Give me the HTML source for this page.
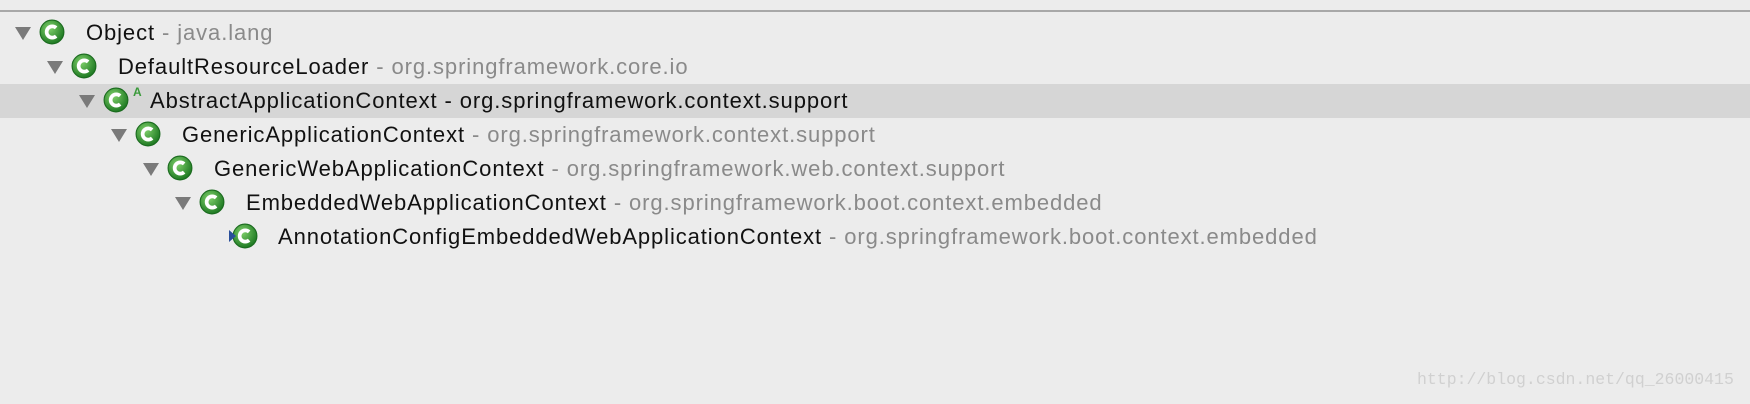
<!DOCTYPE html>
<html><head><style>
body{margin:0;width:1750px;height:404px;background:#ececec;position:relative;overflow:hidden;font-family:"Liberation Sans",sans-serif;}
.top{position:absolute;left:0;top:0;width:1750px;height:10px;background:#ececec;border-bottom:2px solid #a8a8a8;}
.row{position:absolute;left:0;width:1750px;height:34px;}
.sel{background:#d6d6d6;}
.tri{position:absolute;top:11px;width:0;height:0;border-left:8px solid transparent;border-right:8px solid transparent;border-top:13px solid #7a7a7a;}
.ic{position:absolute;top:3px;width:26px;height:26px;}
.t{position:absolute;top:4px;font-size:22px;letter-spacing:0.9px;color:#111;white-space:nowrap;}
.t span{color:#8a8a8a;}
.A{position:absolute;top:1px;font-size:12px;color:#3a9a3a;font-weight:bold;}
.wm{position:absolute;left:1417px;top:370px;font-family:"Liberation Mono",monospace;font-size:16.5px;color:#d0d0d0;}
</style></head><body>
<div class="top"></div>
<svg width="0" height="0" style="position:absolute"><defs>
<radialGradient id="g" cx="40%" cy="35%" r="65%"><stop offset="0" stop-color="#7fd06a"/><stop offset="1" stop-color="#1f7a23"/></radialGradient>
<symbol id="c" viewBox="0 0 24 24"><circle cx="12" cy="12" r="11" fill="url(#g)" stroke="#1a6a1e" stroke-width="1"/><path d="M15.8 8.2A5.2 5.2 0 1 0 15.8 15.8" fill="none" stroke="#fff" stroke-width="3.4"/></symbol>
</defs></svg>

<div class="row" style="top:16px"><div class="tri" style="left:15px"></div><svg class="ic" style="left:39px"><use href="#c"/></svg><div class="t" style="left:86px">Object <span>- java.lang</span></div></div>
<div class="row" style="top:50px"><div class="tri" style="left:47px"></div><svg class="ic" style="left:71px"><use href="#c"/></svg><div class="t" style="left:118px">DefaultResourceLoader <span>- org.springframework.core.io</span></div></div>
<div class="row sel" style="top:84px"><div class="tri" style="left:79px"></div><svg class="ic" style="left:103px"><use href="#c"/></svg><div class="A" style="left:133px">A</div><div class="t" style="left:150px">AbstractApplicationContext - org.springframework.context.support</div></div>
<div class="row" style="top:118px"><div class="tri" style="left:111px"></div><svg class="ic" style="left:135px"><use href="#c"/></svg><div class="t" style="left:182px">GenericApplicationContext <span>- org.springframework.context.support</span></div></div>
<div class="row" style="top:152px"><div class="tri" style="left:143px"></div><svg class="ic" style="left:167px"><use href="#c"/></svg><div class="t" style="left:214px">GenericWebApplicationContext <span>- org.springframework.web.context.support</span></div></div>
<div class="row" style="top:186px"><div class="tri" style="left:175px"></div><svg class="ic" style="left:199px"><use href="#c"/></svg><div class="t" style="left:246px">EmbeddedWebApplicationContext <span>- org.springframework.boot.context.embedded</span></div></div>
<div class="row" style="top:220px"><svg class="ic" style="left:232px"><use href="#c"/></svg><svg style="position:absolute;left:229px;top:10px" width="8" height="12"><path d="M0 0L7 6L0 12Z" fill="#2a4f9a"/></svg><div class="t" style="left:278px">AnnotationConfigEmbeddedWebApplicationContext <span>- org.springframework.boot.context.embedded</span></div></div>
<div class="wm">http://blog.csdn.net/qq_26000415</div>
</body></html>
